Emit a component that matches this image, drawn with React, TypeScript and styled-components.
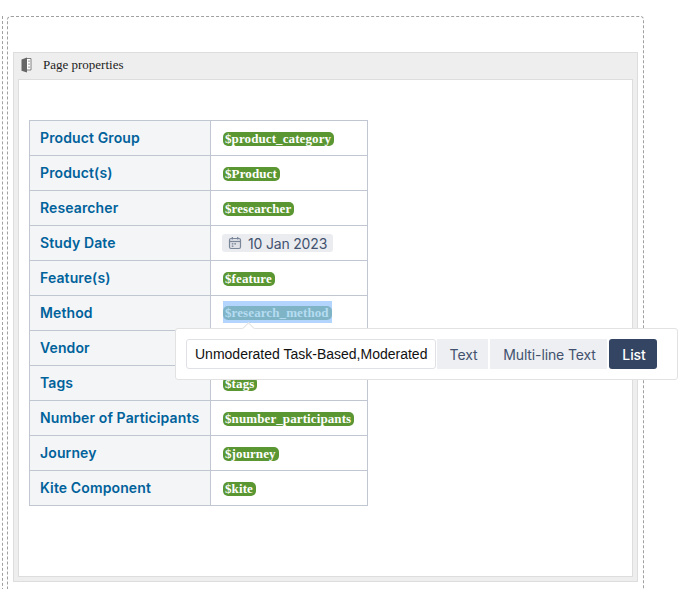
import React from "react";
import styled, { createGlobalStyle } from "styled-components";

const Global = createGlobalStyle`
  html, body { margin: 0; padding: 0; background: #fff; overflow: hidden; height: 589px; }
  #root { height: 589px; overflow: hidden; }
`;

const Page = styled.div`
  position: relative;
  width: 686px;
  height: 589px;
  padding: 16px 0 0 2px;
  box-sizing: border-box;
  overflow: hidden;
`;

const Rail = styled.div`
  border-left: 1px dashed #a0a0a0;
  padding-left: 4px;
  width: 641px;
  box-sizing: border-box;
`;

const Editor = styled.div`
  width: 637px;
  height: 600px;
  box-sizing: border-box;
  border: 1px dashed #a0a0a0;
  border-radius: 4px;
  padding: 35px 4px 0 5px;
`;

const Macro = styled.section`
  width: 625px;
  height: 530px;
  box-sizing: border-box;
  background: #eeeeee;
  border: 1px solid #dddddd;
  display: flex;
  flex-direction: column;
`;

const MacroTitle = styled.header`
  height: 26px;
  box-sizing: border-box;
  flex: none;
  display: flex;
  align-items: center;
  gap: 11px;
  padding: 0 0 3px 7px;
  font: 13px/1 "Liberation Serif", serif;
  color: #222;
`;

const MacroBody = styled.div`
  flex: 1;
  margin: 0 4px 4px;
  background: #fff;
  border: 1px solid #dddddd;
  padding: 40px 10px;
`;

const Table = styled.table`
  border-collapse: collapse;
  table-layout: fixed;
  width: 339px;
  font-family: Inter, "Liberation Sans", sans-serif;
`;

const Row = styled.tr`
  height: 35px;
`;

const Head = styled.th`
  width: 181px;
  box-sizing: border-box;
  padding: 0 10px 2px;
  background: #f4f5f7;
  border: 1px solid #c1c7d0;
  color: #00629b;
  font-size: 14px;
  font-weight: 600;
  letter-spacing: 0.12px;
  text-align: left;
  white-space: nowrap;
`;

const Cell = styled.td`
  box-sizing: border-box;
  padding: 0 12px 2px;
  border: 1px solid #c1c7d0;
  white-space: nowrap;
`;

const Tag = styled.span<{ $selected?: boolean }>`
  display: inline-block;
  height: 14px;
  padding: 0 3px 0 2px;
  border-radius: 5px;
  background: ${(p) => (p.$selected ? "#7fb4c6" : "#5a9632")};
  color: ${(p) => (p.$selected ? "#b5dcf2" : "#fff")};
  font: bold 13px/14px "Liberation Serif", serif;
  letter-spacing: 0.1px;
  vertical-align: middle;
`;

const Selection = styled.span`
  display: inline-block;
  background: #b3d4fc;
  padding: 3px 0;
  line-height: 14px;
`;

const DatePill = styled.span`
  display: inline-flex;
  align-items: center;
  gap: 6px;
  height: 18px;
  padding: 0 6px;
  margin-left: -1px;
  border-radius: 3px;
  background: #ebecf0;
  color: #42526e;
  font-size: 14px;
  letter-spacing: -0.18px;
  vertical-align: middle;
`;

const Popup = styled.div`
  position: absolute;
  left: 175px;
  top: 328px;
  width: 503px;
  height: 52px;
  box-sizing: border-box;
  background: #fff;
  border: 1px solid #e2e2e2;
  border-radius: 3px;
  padding: 10px;
  display: flex;
  align-items: stretch;
  gap: 2px;
  font-family: Inter, "Liberation Sans", sans-serif;

  &::before {
    content: "";
    position: absolute;
    left: 68px;
    top: -5px;
    width: 8px;
    height: 8px;
    background: #fff;
    border-left: 1px solid #e2e2e2;
    border-top: 1px solid #e2e2e2;
    transform: rotate(45deg);
  }
`;

const Field = styled.div`
  width: 250px;
  height: 30px;
  box-sizing: border-box;
  border: 1px solid #dfe1e6;
  border-radius: 3px;
  margin-right: -1px;
  padding: 0 8px;
  display: flex;
  align-items: center;
  font: 14px "Liberation Sans", Arial, sans-serif;
  color: #111;
  white-space: nowrap;
`;

const TypeButton = styled.div<{ $active?: boolean; $w: number }>`
  width: ${(p) => p.$w}px;
  height: 30px;
  box-sizing: border-box;
  padding-left: 2px;
  flex: none;
  display: flex;
  align-items: center;
  justify-content: center;
  font-size: 14px;
  letter-spacing: -0.12px;
  font-weight: ${(p) => (p.$active ? 500 : 400)};
  border-radius: ${(p) => (p.$active ? "3px" : "0")};
  background: ${(p) => (p.$active ? "#344563" : "#eeeff2")};
  color: ${(p) => (p.$active ? "#fff" : "#42526e")};
`;

const BookIcon = () => (
  <svg width="11" height="16" viewBox="0 0 11 16" aria-hidden="true">
    <path d="M0.5 2.5 L6 0.5 V15.5 L0.5 13.8 Z" fill="#666" />
    <path d="M6 1.5 H10 V13 H6" fill="#fff" stroke="#808080" strokeWidth="1" />
    <path d="M8 3.5v1.3M8 6.5v1.3M8 9.5v1.3" stroke="#6e6e6e" strokeWidth="1.1" />
  </svg>
);

const CalendarIcon = () => (
  <svg width="14" height="14" viewBox="0 0 14 14" aria-hidden="true">
    <rect x="1.5" y="2.5" width="11" height="10" rx="1.5" fill="#dfe1e6" stroke="#7a869a" strokeWidth="1.2" />
    <path d="M1.5 5.5h11" stroke="#7a869a" strokeWidth="1.2" />
    <path d="M4.3 1v2.4M9.7 1v2.4" stroke="#7a869a" strokeWidth="1.2" />
    <rect x="3.8" y="7" width="1.6" height="1.6" fill="#8993a4" />
    <rect x="3.8" y="9.4" width="1.6" height="1.6" fill="#8993a4" />
    <rect x="6.4" y="7" width="1.6" height="1.6" fill="#8993a4" />
  </svg>
);

const rows: [string, React.ReactNode][] = [
  ["Product Group", <Tag>$product_category</Tag>],
  ["Product(s)", <Tag>$Product</Tag>],
  ["Researcher", <Tag>$researcher</Tag>],
  ["Study Date", <DatePill><CalendarIcon />10 Jan 2023</DatePill>],
  ["Feature(s)", <Tag>$feature</Tag>],
  ["Method", <Selection><Tag $selected>$research_method</Tag></Selection>],
  ["Vendor", <Tag>$vendor</Tag>],
  ["Tags", <Tag>$tags</Tag>],
  ["Number of Participants", <Tag>$number_participants</Tag>],
  ["Journey", <Tag>$journey</Tag>],
  ["Kite Component", <Tag>$kite</Tag>],
];

export default function App() {
  return (
    <Page>
      <Global />
      <Rail>
        <Editor>
          <Macro>
            <MacroTitle>
              <BookIcon />
              Page properties
            </MacroTitle>
            <MacroBody>
              <Table>
                <tbody>
                  {rows.map(([label, value]) => (
                    <Row key={label}>
                      <Head>{label}</Head>
                      <Cell>{value}</Cell>
                    </Row>
                  ))}
                </tbody>
              </Table>
            </MacroBody>
          </Macro>
        </Editor>
      </Rail>
      <Popup>
        <Field>Unmoderated Task-Based,Moderated</Field>
        <TypeButton $w={51}>Text</TypeButton>
        <TypeButton $w={117}>Multi-line Text</TypeButton>
        <TypeButton $w={48} $active>List</TypeButton>
      </Popup>
    </Page>
  );
}
